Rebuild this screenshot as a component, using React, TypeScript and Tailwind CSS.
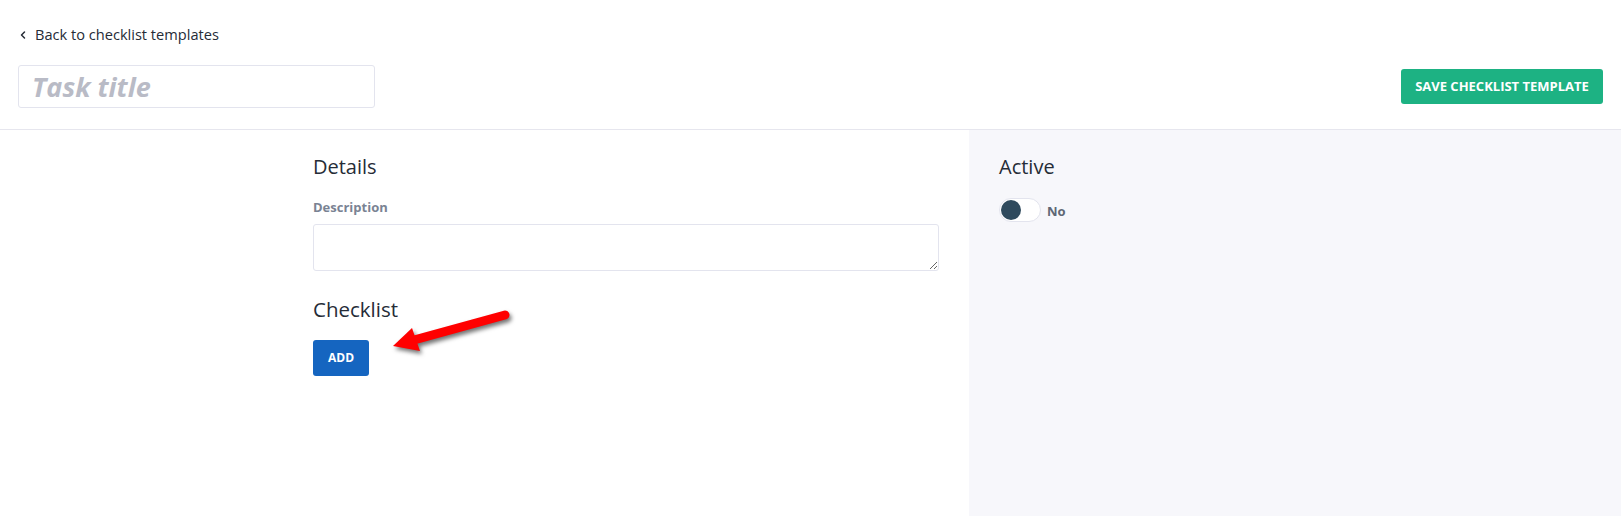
import { ChevronLeft } from 'lucide-react';

export default function App() {
  return (
    <div className="min-h-screen h-[516px] flex flex-col bg-white text-[#262c37]" style={{ fontFamily: '"Open Sans", "Liberation Sans", sans-serif' }}>
      {/* Header */}
      <div className="px-[18px] pt-[25px] pb-[21px] border-b border-[#e6e6ee]">
        <a href="#" className="flex items-center h-[20px] text-[14.6px] text-[#262c37]">
          <ChevronLeft className="w-[12px] h-[12px] ml-[-1px] mr-[6px]" strokeWidth={3} />
          Back to checklist templates
        </a>
        <div className="mt-[20px] flex items-center justify-between">
          <input
            placeholder="Task title"
            className="w-[357px] h-[43px] rounded-[3px] border border-[#e3e4ee] px-[13px] text-[27px] font-bold italic outline-none placeholder:text-[#b9bbc6]"
          />
          <button className="w-[202px] h-[35px] rounded-[3px] bg-[#1db283] text-white text-[13px] font-bold uppercase flex items-center justify-center">
            Save checklist template
          </button>
        </div>
      </div>

      {/* Body */}
      <div className="flex flex-1">
        <div className="relative w-[969px] flex justify-end pr-[30px] pt-[23px]">
          <div className="w-[626px]">
            <h2 className="text-[20px] leading-[28px] font-medium">Details</h2>
            <label className="block mt-[17px] text-[13px] leading-[18px] font-bold text-[#7a8393]">Description</label>
            <textarea className="mt-[8px] block w-full h-[47px] rounded-[3px] border border-[#e3e4ee] outline-none" />
            <h2 className="mt-[24px] text-[20.5px] leading-[28px] font-medium">Checklist</h2>
            <button className="mt-[17px] w-[56px] h-[36px] rounded-[3px] bg-[#1565c0] text-white text-[12px] font-bold">
              ADD
            </button>
          </div>

          {/* annotation arrow */}
          <svg
            className="absolute left-[380px] top-[165px] drop-shadow-[2px_3px_2px_rgba(0,0,0,0.55)]"
            width="140"
            height="65"
            viewBox="0 0 140 65"
          >
            <line x1="125" y1="20" x2="34" y2="45" stroke="#ff0000" strokeWidth="9" strokeLinecap="round" />
            <polygon points="13,51 32,33 40,56" fill="#ff0000" />
          </svg>
        </div>

        <div className="flex-1 bg-[#f7f7fb] px-[30px] pt-[23px]">
          <h2 className="text-[20px] leading-[28px] font-medium">Active</h2>
          <div className="mt-[17px] flex items-center">
            <div className="w-[42px] h-[24px] rounded-full bg-white border border-[#e3e4ee] flex items-center px-[1px]">
              <div className="w-[20px] h-[20px] rounded-full bg-[#2f4a5d]" />
            </div>
            <span className="ml-[6px] mt-[4px] text-[13px] font-bold text-[#5f6775]">No</span>
          </div>
        </div>
      </div>
    </div>
  );
}
